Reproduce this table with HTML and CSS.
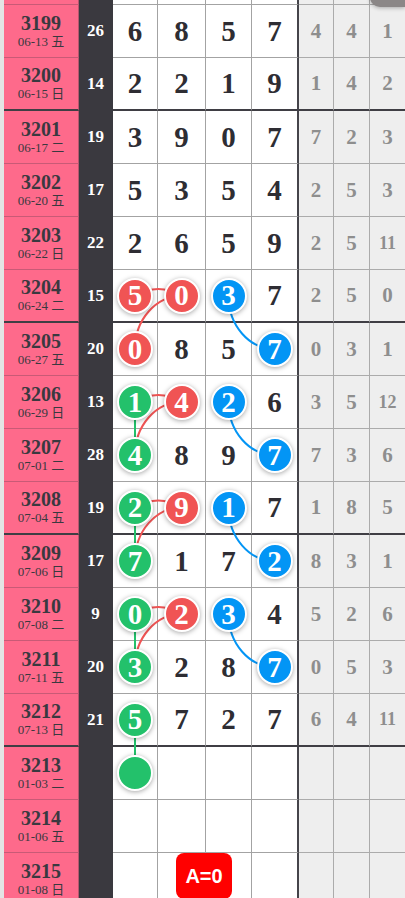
FILE: index.html
```html
<!DOCTYPE html>
<html>

<head>
    <meta name="viewport" content="width=device-width, initial-scale=1.0">
    <title>走势图</title>
    <link rel="stylesheet" href="styles.css">
</head>

<body>
    <div class="corner"></div>

    <div class="sheet">
        <!-- 上一期只露出底边 -->
        <div class="row stub">
            <div class="issue"></div><div class="sum"></div>
            <div class="num"></div><div class="num"></div><div class="num"></div><div class="num last"></div>
            <div class="gap"></div><div class="gap"></div><div class="gap end"></div>
        </div>

        <div class="row">
            <div class="issue"><b>3199</b><span>06-13 五</span></div><div class="sum">26</div>
            <div class="num">6</div><div class="num">8</div><div class="num">5</div><div class="num last">7</div>
            <div class="gap">4</div><div class="gap">4</div><div class="gap end">1</div>
        </div>
        <div class="row split">
            <div class="issue"><b>3200</b><span>06-15 日</span></div><div class="sum">14</div>
            <div class="num">2</div><div class="num">2</div><div class="num">1</div><div class="num last">9</div>
            <div class="gap">1</div><div class="gap">4</div><div class="gap end">2</div>
        </div>

        <div class="row">
            <div class="issue"><b>3201</b><span>06-17 二</span></div><div class="sum">19</div>
            <div class="num">3</div><div class="num">9</div><div class="num">0</div><div class="num last">7</div>
            <div class="gap">7</div><div class="gap">2</div><div class="gap end">3</div>
        </div>
        <div class="row">
            <div class="issue"><b>3202</b><span>06-20 五</span></div><div class="sum">17</div>
            <div class="num">5</div><div class="num">3</div><div class="num">5</div><div class="num last">4</div>
            <div class="gap">2</div><div class="gap">5</div><div class="gap end">3</div>
        </div>
        <div class="row">
            <div class="issue"><b>3203</b><span>06-22 日</span></div><div class="sum">22</div>
            <div class="num">2</div><div class="num">6</div><div class="num">5</div><div class="num last">9</div>
            <div class="gap">2</div><div class="gap">5</div><div class="gap end two">11</div>
        </div>
        <div class="row split">
            <div class="issue"><b>3204</b><span>06-24 二</span></div><div class="sum">15</div>
            <div class="num"><span class="ball red">5</span></div>
            <div class="num"><span class="ball red">0</span></div>
            <div class="num"><span class="ball blue">3</span></div>
            <div class="num last">7</div>
            <div class="gap">2</div><div class="gap">5</div><div class="gap end">0</div>
        </div>

        <div class="row">
            <div class="issue"><b>3205</b><span>06-27 五</span></div><div class="sum">20</div>
            <div class="num"><span class="ball red">0</span></div>
            <div class="num">8</div><div class="num">5</div>
            <div class="num last"><span class="ball blue">7</span></div>
            <div class="gap">0</div><div class="gap">3</div><div class="gap end">1</div>
        </div>
        <div class="row">
            <div class="issue"><b>3206</b><span>06-29 日</span></div><div class="sum">13</div>
            <div class="num"><span class="ball green">1</span></div>
            <div class="num"><span class="ball red">4</span></div>
            <div class="num"><span class="ball blue">2</span></div>
            <div class="num last">6</div>
            <div class="gap">3</div><div class="gap">5</div><div class="gap end two">12</div>
        </div>
        <div class="row">
            <div class="issue"><b>3207</b><span>07-01 二</span></div><div class="sum">28</div>
            <div class="num"><span class="ball green">4</span></div>
            <div class="num">8</div><div class="num">9</div>
            <div class="num last"><span class="ball blue">7</span></div>
            <div class="gap">7</div><div class="gap">3</div><div class="gap end">6</div>
        </div>
        <div class="row split">
            <div class="issue"><b>3208</b><span>07-04 五</span></div><div class="sum">19</div>
            <div class="num"><span class="ball green">2</span></div>
            <div class="num"><span class="ball red">9</span></div>
            <div class="num"><span class="ball blue">1</span></div>
            <div class="num last">7</div>
            <div class="gap">1</div><div class="gap">8</div><div class="gap end">5</div>
        </div>

        <div class="row">
            <div class="issue"><b>3209</b><span>07-06 日</span></div><div class="sum">17</div>
            <div class="num"><span class="ball green">7</span></div>
            <div class="num">1</div><div class="num">7</div>
            <div class="num last"><span class="ball blue">2</span></div>
            <div class="gap">8</div><div class="gap">3</div><div class="gap end">1</div>
        </div>
        <div class="row">
            <div class="issue"><b>3210</b><span>07-08 二</span></div><div class="sum">9</div>
            <div class="num"><span class="ball green">0</span></div>
            <div class="num"><span class="ball red">2</span></div>
            <div class="num"><span class="ball blue">3</span></div>
            <div class="num last">4</div>
            <div class="gap">5</div><div class="gap">2</div><div class="gap end">6</div>
        </div>
        <div class="row">
            <div class="issue"><b>3211</b><span>07-11 五</span></div><div class="sum">20</div>
            <div class="num"><span class="ball green">3</span></div>
            <div class="num">2</div><div class="num">8</div>
            <div class="num last"><span class="ball blue">7</span></div>
            <div class="gap">0</div><div class="gap">5</div><div class="gap end">3</div>
        </div>
        <div class="row split">
            <div class="issue"><b>3212</b><span>07-13 日</span></div><div class="sum">21</div>
            <div class="num"><span class="ball green">5</span></div>
            <div class="num">7</div><div class="num">2</div><div class="num last">7</div>
            <div class="gap">6</div><div class="gap">4</div><div class="gap end two">11</div>
        </div>

        <div class="row">
            <div class="issue"><b>3213</b><span>01-03 二</span></div><div class="sum"></div>
            <div class="num"><span class="ball green"></span></div>
            <div class="num"></div><div class="num"></div><div class="num last"></div>
            <div class="gap"></div><div class="gap"></div><div class="gap end"></div>
        </div>
        <div class="row">
            <div class="issue"><b>3214</b><span>01-06 五</span></div><div class="sum"></div>
            <div class="num"></div><div class="num"></div><div class="num"></div><div class="num last"></div>
            <div class="gap"></div><div class="gap"></div><div class="gap end"></div>
        </div>
        <div class="row">
            <div class="issue"><b>3215</b><span>01-08 日</span></div><div class="sum"></div>
            <div class="num"></div><div class="num"></div><div class="num"></div><div class="num last"></div>
            <div class="gap"></div><div class="gap"></div><div class="gap end"></div>
        </div>

        <!-- 连线层 -->
        <svg class="links" width="405" height="898" viewBox="0 0 405 898">
            <g class="line-red">
                <path d="M135,296 Q158.25,282 181.5,296" />
                <path d="M181.5,296 A46.5,53 0 0 0 135,349" />
                <path d="M135,402 Q158.25,388 181.5,402" />
                <path d="M181.5,402 A46.5,53 0 0 0 135,455" />
                <path d="M135,507.5 Q158.25,493.5 181.5,507.5" />
                <path d="M181.5,507.5 A46.5,53.5 0 0 0 135,561" />
                <path d="M135,614 Q158.25,600 181.5,614" />
                <path d="M181.5,614 A46.5,53 0 0 0 135,667" />
            </g>
            <g class="line-blue">
                <path d="M228.5,296 A46,53 0 0 0 274.5,349" />
                <path d="M228.5,402 A46,53 0 0 0 274.5,455" />
                <path d="M228.5,507.5 A46,53.5 0 0 0 274.5,561" />
                <path d="M228.5,614 A46,53 0 0 0 274.5,667" />
            </g>
            <g class="line-green">
                <path d="M135,402 V455" />
                <path d="M135,507.5 V561" />
                <path d="M135,614 V667" />
                <path d="M135,719.5 V773" />
            </g>
        </svg>
    </div>

    <div class="badge">A=0</div>
</body>

</html>
```

FILE: styles.css
```css
* {
    box-sizing: border-box;
}

html,
body {
    height: 100%;
}

body {
    margin: 0;
    padding-left: 4px;
    background: #e4e4e4;
    font-family: "Liberation Serif", "Noto Sans CJK SC", serif;
    overflow: hidden;
}

/* 表格 */
.sheet {
    position: relative;
}

.row {
    display: grid;
    grid-template-columns: 75px 34px 45px 48px 46px 47px 35px 36px 35px;
    height: 53px;
}

.row.stub {
    height: 5px;
}

.row > div {
    display: flex;
    align-items: center;
    justify-content: center;
    border-right: 1px solid #a3a3a3;
    border-bottom: 1px solid #a3a3a3;
}

/* 期号 + 日期 */
.row .issue {
    flex-direction: column;
    background: #fe6a8b;
    color: #3a3940;
    border-bottom-color: #c85a76;
    border-right-color: #b8566e;
}

.issue b {
    font-size: 20px;
    line-height: 20px;
}

.issue span {
    font-size: 13px;
    line-height: 16px;
    margin-top: 1px;
}

/* 和值 */
.row .sum {
    background: #3a393f;
    border-color: #3a393f;
    color: #ffffff;
    font-size: 17px;
    font-weight: bold;
}

/* 开奖号码 */
.row .num {
    background: #ffffff;
    color: #2e2d33;
    font-size: 29px;
    font-weight: bold;
}

.row .num.last {
    border-right: 2px solid #45444a;
}

/* 遗漏 */
.row .gap {
    background: #eeeeee;
    border-color: #ababab;
    color: #8e8e8e;
    font-size: 21px;
    font-weight: bold;
}

.row .gap.two {
    font-size: 18px;
}

.row .gap.end {
    border-right: 0;
}

/* 每四期一条粗线 */
.row.split > div {
    border-bottom: 2px solid #3f3e44;
}

.row.split > .sum {
    border-bottom-color: #3a393f;
}

/* 号码球 */
.ball {
    position: relative;
    z-index: 2;
    width: 36px;
    height: 36px;
    border: 2px solid #ffffff;
    border-radius: 50%;
    display: flex;
    align-items: center;
    justify-content: center;
    color: #ffffff;
    font-size: 29px;
    line-height: 1;
    box-shadow: 0 1px 5px rgba(0, 0, 0, 0.35);
}

.ball.red {
    background: #f05454;
}

.ball.blue {
    background: #0395f5;
}

.ball.green {
    background: #23c16b;
}

/* 连线 */
.links {
    position: absolute;
    left: -4px;
    top: 0;
    z-index: 1;
    pointer-events: none;
}

.links path {
    fill: none;
    stroke-width: 2;
}

.line-red path {
    stroke: #f05454;
}

.line-blue path {
    stroke: #0395f5;
}

.line-green path {
    stroke: #23c16b;
}

/* 右上角按钮露出的一角 */
.corner {
    position: absolute;
    top: -30px;
    right: 0;
    width: 35px;
    height: 37px;
    background: #8b8787;
    border-radius: 0 0 0 10px;
    box-shadow: 0 1px 4px rgba(0, 0, 0, 0.3);
    z-index: 3;
}

/* 底部浮动按钮 */
.badge {
    position: absolute;
    left: 176px;
    top: 853px;
    width: 56px;
    height: 46px;
    background: #ff0000;
    border-radius: 8px;
    color: #ffffff;
    font-family: "Liberation Sans", Arial, sans-serif;
    font-size: 20px;
    font-weight: bold;
    display: flex;
    align-items: center;
    justify-content: center;
    z-index: 3;
}
```
